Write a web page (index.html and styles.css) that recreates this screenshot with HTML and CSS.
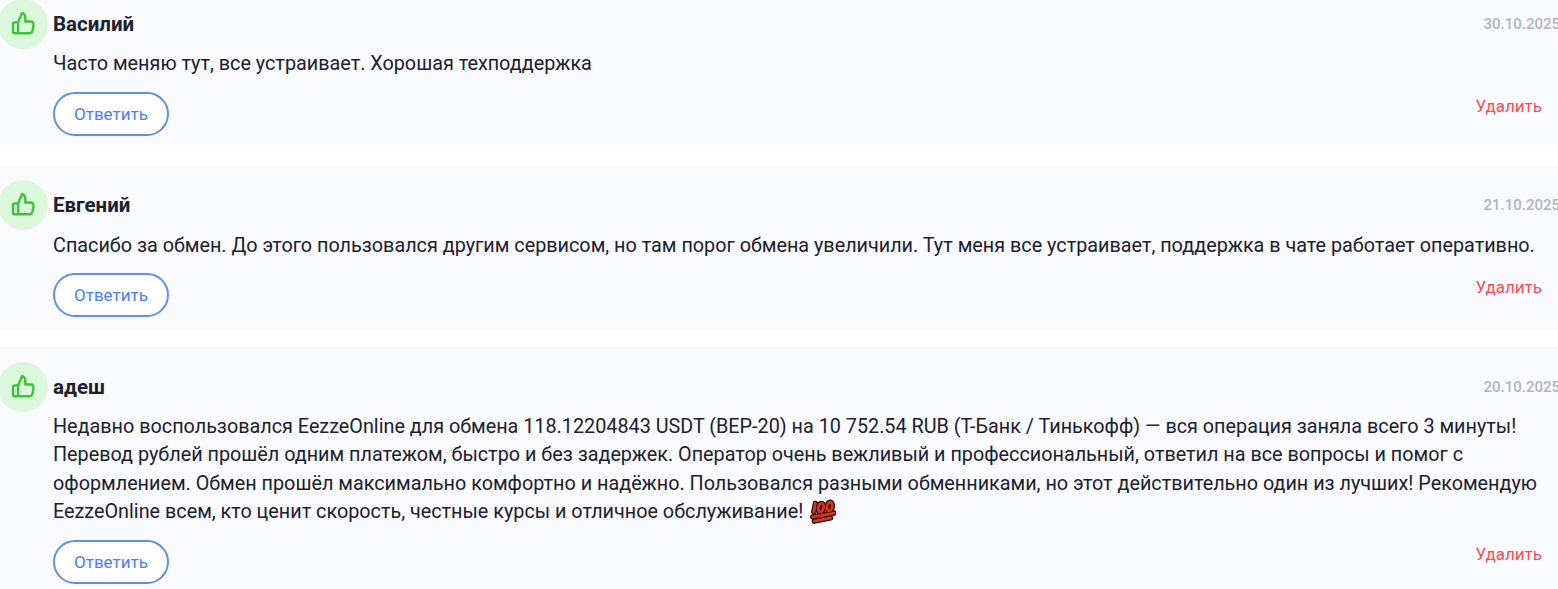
FILE: index.html
```html
<!DOCTYPE html>
<html lang="en">
<head>
  <meta charset="UTF-8" />
  <title>Отзывы</title>
  <link rel="stylesheet" href="styles.css">
</head>
<body>
  <svg class="icon-defs" width="0" height="0">
    <symbol id="thumb" viewBox="0 0 24 24">
      <path d="M7.5 10.5v10M7.5 10.5H4.2c-.8 0-1.4.6-1.4 1.4v7.2c0 .8.6 1.4 1.4 1.4h13.6c1.5 0 2.6-1 2.9-2.3l1-5.4c.3-1.7-.9-3.1-2.6-3.1h-5V6c0-2-1.3-3.6-3-4.2l-3.6 8.7z" fill="none" stroke="currentColor" stroke-width="2.2" stroke-linejoin="round" stroke-linecap="round"/>
    </symbol>
  </svg>

  <div class="reviews">
    <div class="review">
      <div class="avatar"><svg class="thumb"><use href="#thumb"/></svg></div>
      <div class="review-body">
        <div class="review-head">
          <span class="review-name">Василий</span>
          <span class="review-date">30.10.2025</span>
        </div>
        <p class="review-text">Часто меняю тут, все устраивает. Хорошая техподдержка</p>
        <div class="review-actions">
          <button class="btn-reply">Ответить</button>
          <a class="link-delete" href="#">Удалить</a>
        </div>
      </div>
    </div>

    <div class="review">
      <div class="avatar"><svg class="thumb"><use href="#thumb"/></svg></div>
      <div class="review-body">
        <div class="review-head">
          <span class="review-name">Евгений</span>
          <span class="review-date">21.10.2025</span>
        </div>
        <p class="review-text">Спасибо за обмен. До этого пользовался другим сервисом, но там порог обмена увеличили. Тут меня все устраивает, поддержка в чате работает оперативно.</p>
        <div class="review-actions">
          <button class="btn-reply">Ответить</button>
          <a class="link-delete" href="#">Удалить</a>
        </div>
      </div>
    </div>

    <div class="review">
      <div class="avatar"><svg class="thumb"><use href="#thumb"/></svg></div>
      <div class="review-body">
        <div class="review-head">
          <span class="review-name">адеш</span>
          <span class="review-date">20.10.2025</span>
        </div>
        <p class="review-text">Недавно воспользовался EezzeOnline для обмена 118.12204843 USDT (BEP-20) на 10 752.54 RUB (Т-Банк / Тинькофф) — вся операция заняла всего 3 минуты! Перевод рублей прошёл одним платежом, быстро и без задержек. Оператор очень вежливый и профессиональный, ответил на все вопросы и помог с оформлением. Обмен прошёл максимально комфортно и надёжно. Пользовался разными обменниками, но этот действительно один из лучших! Рекомендую EezzeOnline всем, кто ценит скорость, честные курсы и отличное обслуживание! <svg class="emoji-100" viewBox="0 0 24 24"><g fill="none" stroke-linecap="round"><path d="M5 4L3.500 12M10.500 4a2.400 4 10 1 0 .1 0zM18.500 3a2.400 4 10 1 0 .1 0zM2.500 16.500C9 15.500 15 14.500 22 13M4 20.500c5-1 10-2 15-3" stroke="#2a0d08" stroke-width="5"/><path d="M5 4L3.500 12M10.500 4a2.400 4 10 1 0 .1 0zM18.500 3a2.400 4 10 1 0 .1 0zM2.500 16.500C9 15.500 15 14.500 22 13M4 20.500c5-1 10-2 15-3" stroke="#d8341a" stroke-width="2.600"/></g></svg></p>
        <div class="review-actions">
          <button class="btn-reply">Ответить</button>
          <a class="link-delete" href="#">Удалить</a>
        </div>
      </div>
    </div>
  </div>
</body>
</html>
```

FILE: styles.css
```css
html, body {
  height: 100%;
}

body {
  margin: 0;
  background: #fff;
  color: #1b2033;
  font-family: Roboto, sans-serif;
  overflow: hidden;
}

.icon-defs {
  position: absolute;
}

.reviews {
  display: flex;
  flex-direction: column;
  gap: 16px;
  margin-top: -16.500px;
}

.review {
  display: flex;
  align-items: flex-start;
  background: #fafbfe;
  padding: 15px 0 13.500px 0;
}

.avatar {
  flex: none;
  display: flex;
  align-items: center;
  justify-content: center;
  width: 50px;
  height: 50px;
  margin: 0 5px 0 -2px;
  border-radius: 50%;
  background: #dcf8dc;
  color: #3dc23d;
}

.thumb {
  width: 26px;
  height: 26px;
}

.review-body {
  flex: 1;
  min-width: 0;
  padding-top: 13px;
}

.review-head {
  display: flex;
  justify-content: space-between;
  align-items: center;
  height: 24px;
}

.review-name {
  font-size: 20.500px;
  font-weight: 700;
}

.review-date {
  font-size: 15px;
  font-weight: 500;
  color: #b0b4c0;
  margin-right: -2px;
}

.review-text {
  margin: 14.500px 12px 0 0;
  font-size: 19.800px;
  line-height: 28.300px;
}

.emoji-100 {
  width: 26px;
  height: 26px;
  vertical-align: -7px;
  margin-left: 2px;
}

.review-actions {
  display: flex;
  justify-content: space-between;
  align-items: flex-start;
  margin-top: 13.300px;
  padding-right: 16px;
}

.btn-reply {
  width: 116px;
  height: 44px;
  border: 2px solid #5b8ff9;
  border-radius: 22px;
  background: #fff;
  color: #4a7dfc;
  font-family: inherit;
  font-size: 17px;
  cursor: pointer;
}

.link-delete {
  margin-top: 4px;
  color: #ff4d4f;
  font-size: 17px;
  text-decoration: none;
}
```
